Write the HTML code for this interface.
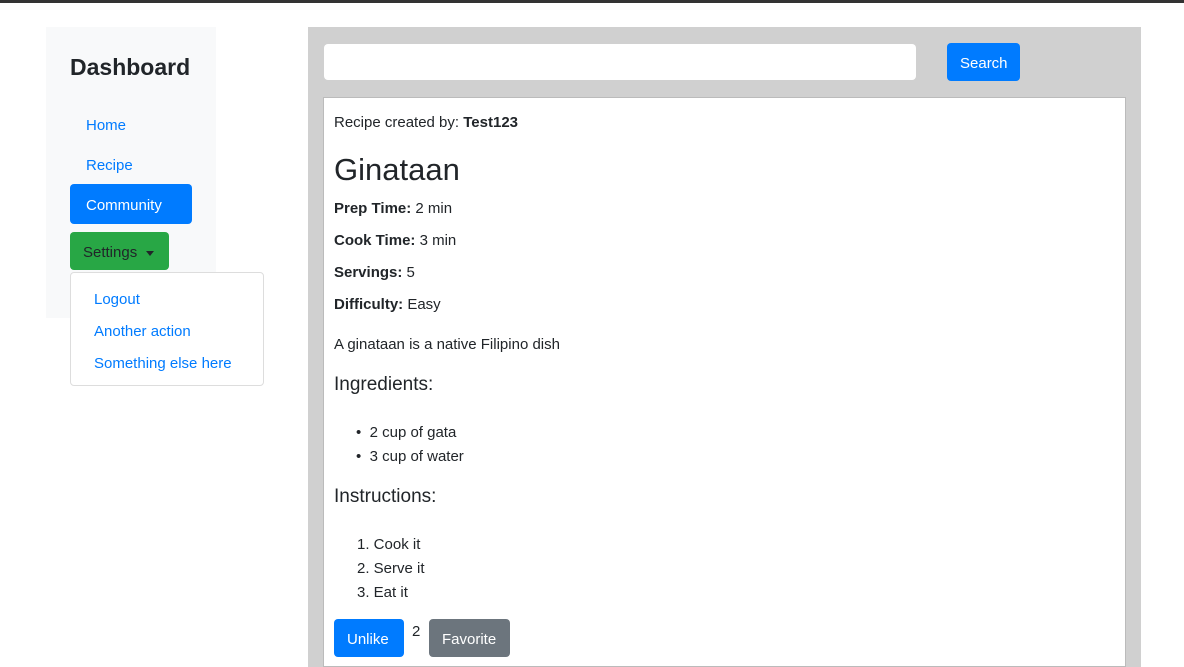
<!DOCTYPE html>
<html><head><style>
*{box-sizing:border-box;margin:0;padding:0}
body{width:1184px;height:665px;overflow:hidden;background:#fff;font-family:"Liberation Sans",sans-serif;font-size:15px;color:#212529;position:relative}
.a{position:absolute;white-space:nowrap}
.t{margin-top:2px}
.blue{color:#007bff}
b{font-weight:bold}
</style></head><body>
<div class="a" style="left:0;top:0;width:1184px;height:3px;background:#333"></div>
<div class="a" style="left:46px;top:27px;width:170px;height:291px;background:#f8f9fa"></div>
<div class="a t" style="left:70px;top:52px;font-size:23px;font-weight:bold">Dashboard</div>
<div class="a blue t" style="left:86px;top:115px">Home</div>
<div class="a blue t" style="left:86px;top:155px">Recipe</div>
<div class="a" style="left:70px;top:184px;width:122px;height:40px;background:#007bff;border-radius:4px;color:#fff;padding:13px 16px 0">Community</div>
<div class="a" style="left:70px;top:232px;width:99px;height:38px;background:#28a745;border-radius:4px;color:#212529;padding:12px 13px 0">Settings <span style="display:inline-block;border-top:5px solid #212529;border-left:4px solid transparent;border-right:4px solid transparent;vertical-align:middle;margin-left:5px"></span></div>
<div class="a" style="left:70px;top:272px;width:194px;height:114px;background:#fff;border:1px solid #ddd;border-radius:4px"></div>
<div class="a blue t" style="left:94px;top:289px">Logout</div>
<div class="a blue t" style="left:94px;top:321px">Another action</div>
<div class="a blue t" style="left:94px;top:353px">Something else here</div>

<div class="a" style="left:308px;top:27px;width:833px;height:640px;background:#d0d0d0"></div>
<div class="a" style="left:324px;top:44px;width:592px;height:36px;background:#fff;border-radius:4px"></div>
<div class="a" style="left:947px;top:43px;width:73px;height:38px;background:#007bff;border-radius:4px;color:#fff;padding:12px 13px 0">Search</div>
<div class="a" style="left:323px;top:97px;width:803px;height:570px;background:#fff;border:1px solid #bbb"></div>
<div class="a t" style="left:334px;top:112px">Recipe created by: <b>Test123</b></div>
<div class="a t" style="left:334px;top:150px;font-size:31px">Ginataan</div>
<div class="a t" style="left:334px;top:198px"><b>Prep Time:</b> 2 min</div>
<div class="a t" style="left:334px;top:230px"><b>Cook Time:</b> 3 min</div>
<div class="a t" style="left:334px;top:262px"><b>Servings:</b> 5</div>
<div class="a t" style="left:334px;top:294px"><b>Difficulty:</b> Easy</div>
<div class="a t" style="left:334px;top:334px">A ginataan is a native Filipino dish</div>
<div class="a t" style="left:334px;top:372px;font-size:19px">Ingredients:</div>
<div class="a t" style="left:356px;top:422px">•&nbsp;&nbsp;2 cup of gata</div>
<div class="a t" style="left:356px;top:446px">•&nbsp;&nbsp;3 cup of water</div>
<div class="a t" style="left:334px;top:484px;font-size:19px">Instructions:</div>
<div class="a t" style="left:357px;top:534px">1. Cook it</div>
<div class="a t" style="left:357px;top:558px">2. Serve it</div>
<div class="a t" style="left:357px;top:582px">3. Eat it</div>
<div class="a" style="left:334px;top:619px;width:70px;height:38px;background:#007bff;border-radius:4px;color:#fff;padding:12px 13px 0">Unlike</div>
<div class="a t" style="left:412px;top:621px">2</div>
<div class="a" style="left:429px;top:619px;width:81px;height:38px;background:#6c757d;border-radius:4px;color:#fff;padding:12px 13px 0">Favorite</div>
</body></html>
